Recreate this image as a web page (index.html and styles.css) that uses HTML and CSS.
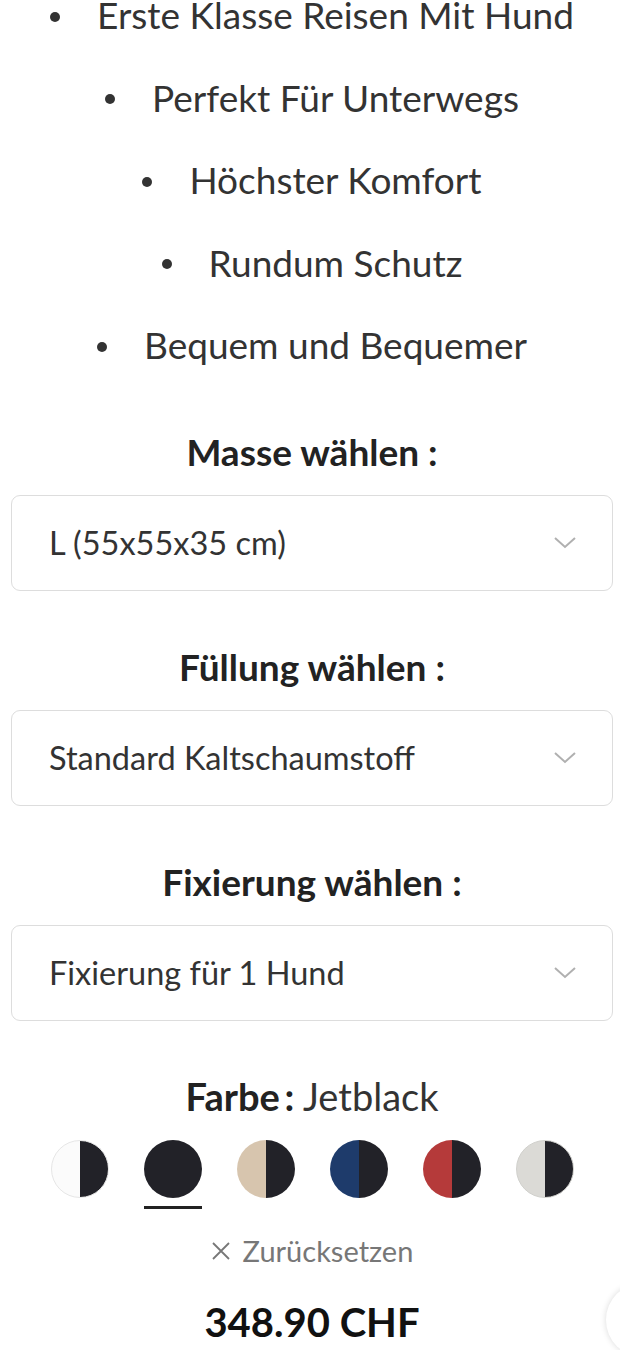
FILE: index.html
```html
<!DOCTYPE html>
<html lang="de">
<head>
  <meta charset="UTF-8" />
  <title>Hundebett</title>
  <meta name="viewport" content="width=device-width, initial-scale=1" />
  <link rel="stylesheet" href="styles.css">
</head>
<body>

  <div id="product">
    <ul class="features">
      <li>Erste Klasse Reisen Mit Hund</li>
      <li>Perfekt Für Unterwegs</li>
      <li>Höchster Komfort</li>
      <li>Rundum Schutz</li>
      <li>Bequem und Bequemer</li>
    </ul>

    <div class="option">
      <h3>Masse wählen :</h3>
      <div class="picker">
        <span>L (55x55x35 cm)</span>
        <svg class="chevron" viewBox="0 0 24 14" width="24" height="14"><path d="M2 2 L12 11 L22 2" /></svg>
      </div>
    </div>

    <div class="option">
      <h3>Füllung wählen :</h3>
      <div class="picker">
        <span>Standard Kaltschaumstoff</span>
        <svg class="chevron" viewBox="0 0 24 14" width="24" height="14"><path d="M2 2 L12 11 L22 2" /></svg>
      </div>
    </div>

    <div class="option">
      <h3>Fixierung wählen :</h3>
      <div class="picker">
        <span>Fixierung für 1 Hund</span>
        <svg class="chevron" viewBox="0 0 24 14" width="24" height="14"><path d="M2 2 L12 11 L22 2" /></svg>
      </div>
    </div>

    <div class="colors">
      <div class="color-label"><b>Farbe&#x2009;:</b> Jetblack</div>
      <div class="swatches">
        <span class="swatch white"></span>
        <span class="swatch black active"></span>
        <span class="swatch sand"></span>
        <span class="swatch navy"></span>
        <span class="swatch red"></span>
        <span class="swatch grey"></span>
      </div>
      <a class="reset" href="#">
        <svg viewBox="0 0 20 20" width="20" height="20"><path d="M2 2 L18 18 M18 2 L2 18" /></svg>
        Zurücksetzen
      </a>
    </div>

    <div class="price">348.90 CHF</div>
  </div>

  <div id="floatBtn"></div>

</body>
</html>
```

FILE: styles.css
```css
html, body {
  margin: 0;
  background: #fff;
  color: #333;
  font-family: Lato, 'Open Sans', sans-serif;
}
body {
  overflow: hidden;
  height: 1350px;
}
#product {
  padding: 0 7px 0 11px;
  text-align: center;
}
.features {
  list-style: none;
  margin: -26px 0 0;
  padding: 0;
}
.features li {
  font-size: 37px;
  line-height: 42.5px;
  padding: 20px 0;
  color: #333;
}
.features li::before {
  content: '';
  display: inline-block;
  width: 10px;
  height: 10px;
  border-radius: 50%;
  background: #333;
  margin-right: 37px;
  vertical-align: middle;
  position: relative;
  top: -3px;
}
.option h3 {
  font-size: 37px;
  line-height: 40px;
  font-weight: 700;
  color: #222;
  margin: 0 0 23px;
}
.features + .option h3 {
  margin-top: 45px;
}
.option + .option h3 {
  margin-top: 56px;
}
.picker {
  height: 96px;
  box-sizing: border-box;
  border: 1.5px solid #ddd;
  border-radius: 9px;
  display: flex;
  align-items: center;
  justify-content: space-between;
  padding: 0 35px 0 37px;
  font-size: 32.5px;
  color: #333;
}
.chevron {
  fill: none;
  stroke: #b0b0b0;
  stroke-width: 2;
}
.colors {
  margin-top: 55px;
}
.color-label {
  font-size: 38px;
  line-height: 40px;
  color: #333;
}
.color-label b {
  color: #222;
}
.swatches {
  display: flex;
  justify-content: center;
  gap: 35px;
  margin-top: 24px;
}
.swatch {
  width: 58px;
  height: 58px;
  border-radius: 50%;
  box-sizing: border-box;
  position: relative;
  background: linear-gradient(to right, var(--c) 50%, #222228 50%);
}
.swatch.white { --c: #fbfbfb; border: 1px solid #e6e6e6; }
.swatch.black { --c: #222228; }
.swatch.sand { --c: #d7c5ae; }
.swatch.navy { --c: #1e3b6b; }
.swatch.red { --c: #b53a3a; }
.swatch.grey { --c: #dbdad6; border: 1px solid #d0d0cc; }
.swatch.active::after {
  content: '';
  position: absolute;
  left: 0;
  right: 0;
  bottom: -11px;
  height: 3px;
  background: #222;
}
.reset {
  display: inline-flex;
  align-items: center;
  gap: 12px;
  margin-top: 36px;
  font-size: 29px;
  line-height: 34px;
  color: #777;
  text-decoration: none;
}
.reset svg {
  fill: none;
  stroke: #777;
  stroke-width: 1.8;
}
.price {
  margin-top: 32px;
  font-size: 40px;
  line-height: 44px;
  font-weight: 700;
  color: #111;
}
#floatBtn {
  position: fixed;
  right: -60px;
  top: 1283px;
  width: 74px;
  height: 74px;
  border-radius: 50%;
  background: #fff;
  box-shadow: 0 0 6px rgba(0, 0, 0, 0.15);
}
```
